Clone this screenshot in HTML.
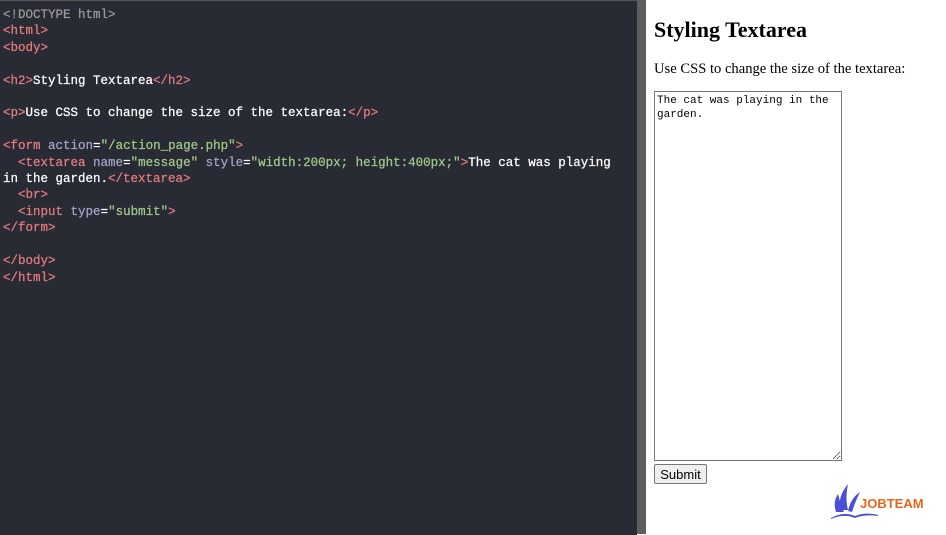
<!DOCTYPE html>
<html><head><style>
body{margin:0;width:946px;height:534px;overflow:hidden;background:#fff;position:relative}
#code{position:absolute;left:0;top:0;width:637px;height:534px;background:#282b33;border-top:1px solid #555}
#div{position:absolute;left:637px;top:0;width:9px;height:534px;background:#5e5e5e}
pre{margin:0;padding:6px 0 0 3px;font:12.5px/16.4px "Liberation Mono",monospace;color:#fff;white-space:pre;-webkit-text-stroke:0.25px}
.t{color:#e57b7f}.a{color:#a3a3c8}.s{color:#9fc98a}.g{color:#9a9a9a}
#out{position:absolute;left:654px;top:0;font-family:"Liberation Serif",serif;color:#000}
h2{font-size:22px;margin:17px 0 0}
p{font-size:14.6px;margin:18px 0 0}
textarea{position:absolute;left:654px;top:91px;width:188px;height:370px;box-sizing:border-box;border:1px solid #767676;font:11px/14px "Liberation Mono",monospace;padding:2px;resize:both;margin:0}
button{position:absolute;left:654px;top:464px;width:53px;height:20px;font:13px "Liberation Sans",sans-serif;background:#efefef;border:1px solid #767676;border-radius:2px;padding:0}
</style></head><body>
<div id="code"><pre><span class="g">&lt;!DOCTYPE html&gt;</span>
<span class="t">&lt;html&gt;</span>
<span class="t">&lt;body&gt;</span>

<span class="t">&lt;h2&gt;</span>Styling Textarea<span class="t">&lt;/h2&gt;</span>

<span class="t">&lt;p&gt;</span>Use CSS to change the size of the textarea:<span class="t">&lt;/p&gt;</span>

<span class="t">&lt;form</span> <span class="a">action</span>=<span class="s">"/action_page.php"</span><span class="t">&gt;</span>
  <span class="t">&lt;textarea</span> <span class="a">name</span>=<span class="s">"message"</span> <span class="a">style</span>=<span class="s">"width:200px; height:400px;"</span><span class="t">&gt;</span>The cat was playing
in the garden.<span class="t">&lt;/textarea&gt;</span>
  <span class="t">&lt;br&gt;</span>
  <span class="t">&lt;input</span> <span class="a">type</span>=<span class="s">"submit"</span><span class="t">&gt;</span>
<span class="t">&lt;/form&gt;</span>

<span class="t">&lt;/body&gt;</span>
<span class="t">&lt;/html&gt;</span></pre></div>
<div id="div"></div>
<div id="out"><h2>Styling Textarea</h2><p>Use CSS to change the size of the textarea:</p></div>
<textarea>The cat was playing in the garden.</textarea>
<button>Submit</button>
<svg style="position:absolute;left:830px;top:480px" width="50" height="40" viewBox="0 0 50 40">
<path d="M12 30 C8 22 10 14 18 4 C16 14 16 22 18 30Z" fill="#4b4fd8"/>
<path d="M6 32 C4 26 4 20 8 14 C10 22 12 28 14 32Z" fill="#4b4fd8"/>
<path d="M18 31 C20 22 24 16 30 12 C26 20 24 26 22 32Z" fill="#4b4fd8"/>
<path d="M1 38 C10 33 18 33 25 36 C32 33 40 33 48 35 L48 36 C40 35 32 35 25 38 C18 35 10 35 1 39Z" fill="#4b4fd8"/>
</svg>
<div style="position:absolute;left:860px;top:496px;font:bold 13px 'Liberation Sans',sans-serif;color:#e8661c">JOBTEAM</div>
</body></html>
